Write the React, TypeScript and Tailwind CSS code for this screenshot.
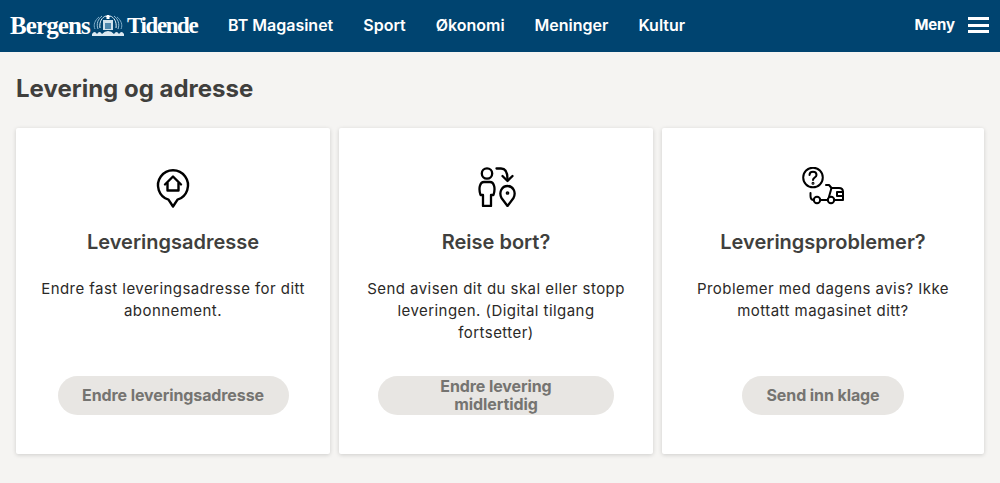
import React from "react";

const navItems = ["BT Magasinet", "Sport", "Økonomi", "Meninger", "Kultur"];

function Crest() {
  return (
    <svg width="34" height="23" viewBox="0 0 34 23" fill="none" className="shrink-0">
      <path d="M9 14 C8 8 11 3 15 2 L17 4 L19 2 C23 3 26 8 25 14" stroke="#e3eef5" strokeWidth="1" />
      <path d="M7 15 C5 10 7 5 11 2 M27 15 C29 10 27 5 23 2" stroke="#9fc4db" strokeWidth="1" />
      <path d="M4 15 C2 11 4 6 8 3 M30 15 C32 11 30 6 26 3" stroke="#7eacc9" strokeWidth="1" />
      <rect x="12" y="6" width="10" height="10" fill="#cfe1ec" />
      <rect x="14" y="9" width="6" height="6" fill="#4f88ad" />
      <path d="M15.5 1 h3 v4 h-3 z" fill="#ffffff" />
      <path d="M1 20 q2.5 -4 5 0 q2.5 -4 5 0 q2.5 -3 6 -3 q3.5 0 6 3 q2.5 -4 5 0 q2.5 -4 5 0 v2 H1 z" fill="#dbe9f2" />
    </svg>
  );
}

function HomePinIcon() {
  return (
    <svg width="36" height="42" viewBox="0 0 36 42" fill="none" stroke="#000" strokeWidth="2.4">
      <path d="M13.5 32.6 A15 15 0 1 1 22.5 32.6 L18 39.5 Z" strokeLinejoin="round" />
      <path d="M10 17.5 L18 9.5 L26 17.5" strokeLinecap="round" strokeLinejoin="round" />
      <path d="M12.5 15.5 V23.5 H23.5 V15.5" strokeLinejoin="round" />
    </svg>
  );
}

function TravelIcon() {
  return (
    <svg width="40" height="40" viewBox="0 0 40 40" fill="none" stroke="#000" strokeWidth="2.3" strokeLinecap="round" strokeLinejoin="round" className="ml-[3px]">
      <circle cx="9" cy="6.5" r="5.2" />
      <path d="M5 39 V28 H2.5 C0.5 22 1.5 15 6 15 H12 C16.5 15 17.5 22 15.5 28 H13 V39 Z" />
      <path d="M18.5 1.5 H23 C27 1.5 29.5 5 29.5 12" />
      <path d="M24.5 9 L29.5 14 L34.5 9" />
      <path d="M29.5 39 L23.5 31 C20.5 25 24 19 29.5 19 C35 19 38.5 25 35.5 31 Z" />
      <circle cx="29.5" cy="26" r="0.7" fill="#000" />
    </svg>
  );
}

function TruckQuestionIcon() {
  return (
    <svg width="42" height="38" viewBox="0 0 42 38" fill="none" stroke="#000" strokeWidth="2" strokeLinecap="round" strokeLinejoin="round">
      <circle cx="11" cy="10.5" r="9.8" />
      <path d="M7.5 8 C7.5 3.5 14.5 3.5 14.5 8 C14.5 10.5 11 10.5 11 13" />
      <circle cx="11" cy="16.2" r="0.5" fill="#000" />
      <path d="M8.5 26 V29 C8.5 32 10 33 11.8 33" />
      <circle cx="15" cy="33" r="3.2" />
      <circle cx="29" cy="33" r="3.2" />
      <path d="M18.2 33 H25.8" />
      <path d="M24 18 H27 L29.5 21 H37 C40 21 41 23 41 25 V33 H32.2" />
      <path d="M29.5 21 L27 29.8" />
      <path d="M41 25 H35 V29 H41" />
    </svg>
  );
}

type CardProps = {
  icon: React.ReactNode;
  title: string;
  text: string[];
  action: string[];
  buttonClass: string;
};

function Card({ icon, title, text, action, buttonClass }: CardProps) {
  return (
    <div className="flex h-[326px] flex-col items-center rounded-[2px] bg-white shadow-[0_1px_4px_rgba(0,0,0,0.16)]">
      <div className="mt-[39px] flex h-[42px] items-start justify-center">{icon}</div>
      <h2 className="mt-[21px] text-[20px] leading-[24px] font-semibold text-[#403f3d]">{title}</h2>
      <p className="mt-[24px] h-[88px] text-center text-[15px] leading-[22px] tracking-[0.45px] text-[#2b2927]">
        {text.map((line) => (
          <span className="block" key={line}>
            {line}
          </span>
        ))}
      </p>
      <button
        className={`mt-[10px] flex h-[39px] flex-col items-center justify-center rounded-[20px] bg-[#e8e6e3] pb-[2px] text-[16px] leading-[18px] font-bold tracking-[-0.1px] text-[#757471] ${buttonClass}`}
      >
        {action.map((line) => (
          <span className="block" key={line}>
            {line}
          </span>
        ))}
      </button>
    </div>
  );
}

export default function App() {
  return (
    <div className="h-[483px] overflow-hidden bg-[#f5f4f2] font-['Inter',sans-serif]">
      <header className="flex h-[52px] items-center bg-[#004470] pb-[2px] text-white">
        <div className="ml-[10px] flex w-[188px] shrink-0 items-center justify-between">
          <span className="w-[78px] font-['Liberation_Serif',serif] text-[25px] leading-none font-bold tracking-[-0.9px] whitespace-nowrap">Bergens</span>
          <Crest />
          <span className="w-[71px] font-['Liberation_Serif',serif] text-[23px] leading-none font-bold tracking-[-1.4px] whitespace-nowrap">Tidende</span>
        </div>
        <nav className="ml-[30px] flex items-center gap-[30px] text-[16px] font-semibold">
          {navItems.map((item) => (
            <a key={item}>{item}</a>
          ))}
        </nav>
        <div className="ml-auto mr-[11px] flex items-center gap-[13px]">
          <span className="text-[15px] font-bold tracking-[-0.1px]">Meny</span>
          <div className="flex h-[16px] w-[21px] flex-col justify-between">
            <div className="h-[3px] bg-white" />
            <div className="h-[3px] bg-white" />
            <div className="h-[3px] bg-white" />
          </div>
        </div>
      </header>
      <main className="px-[16px]">
        <h1 className="mt-[22px] text-[24px] leading-[29px] font-bold text-[#403f3d]">Levering og adresse</h1>
        <div className="mt-[25px] grid grid-cols-[314px_314px_322px] gap-[9px]">
          <Card
            icon={<HomePinIcon />}
            title="Leveringsadresse"
            text={["Endre fast leveringsadresse for ditt", "abonnement."]}
            action={["Endre leveringsadresse"]}
            buttonClass="w-[231px]"
          />
          <Card
            icon={<TravelIcon />}
            title="Reise bort?"
            text={["Send avisen dit du skal eller stopp", "leveringen. (Digital tilgang", "fortsetter)"]}
            action={["Endre levering", "midlertidig"]}
            buttonClass="w-[236px]"
          />
          <Card
            icon={<TruckQuestionIcon />}
            title="Leveringsproblemer?"
            text={["Problemer med dagens avis? Ikke", "mottatt magasinet ditt?"]}
            action={["Send inn klage"]}
            buttonClass="w-[162px]"
          />
        </div>
      </main>
    </div>
  );
}
